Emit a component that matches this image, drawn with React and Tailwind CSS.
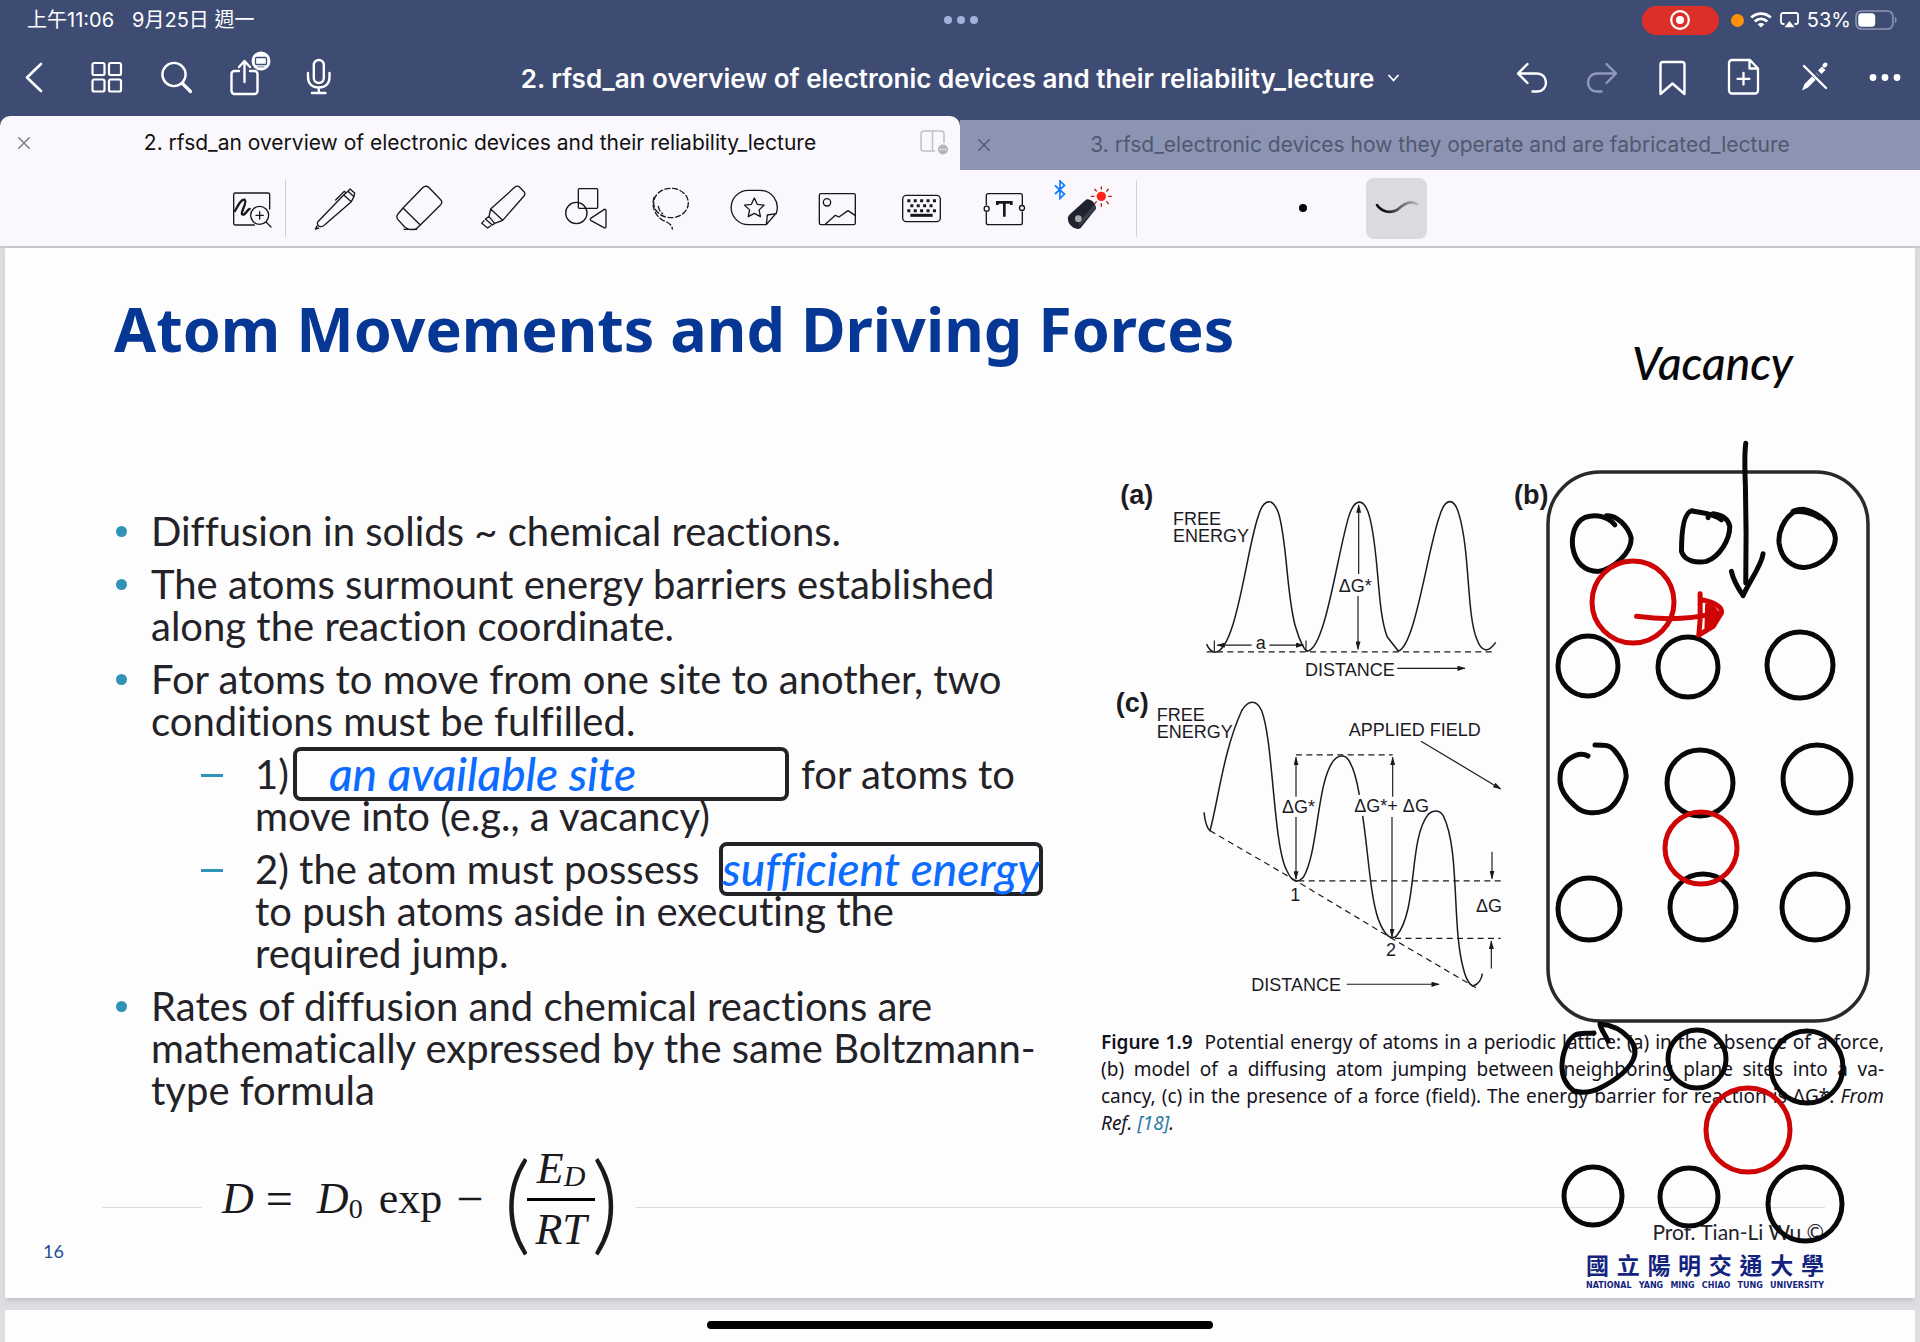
import React from "react";

const ui = "font-['Inter','Noto_Sans_CJK_TC',sans-serif]";

function Icon({ box = "0 0 44 44", size = 44, width = 2, children }) {
  return (
    <svg width={size} height={size} viewBox={box} fill="none" stroke="currentColor" strokeWidth={width} strokeLinecap="round" strokeLinejoin="round" aria-hidden="true" className="shrink-0 overflow-visible">
      {children}
    </svg>
  );
}

function NavButton({ label, dim, children }) {
  return (
    <button type="button" aria-label={label} className={"flex h-16 w-[71px] items-center justify-center " + (dim ? "text-[#8e99bd]" : "text-white")}>
      {children}
    </button>
  );
}

function StatusBar() {
  return (
    <div className="relative flex h-10 items-center justify-between pl-[27px] pr-[22px] text-xl text-white">
      <div className="flex gap-[18px]">
        <span>上午11:06</span>
        <span>9月25日 週一</span>
      </div>
      <div className="absolute left-1/2 top-4 -ml-4 flex gap-[5px]">
        <span className="size-2 rounded-full bg-[#a3b0db]" />
        <span className="size-2 rounded-full bg-[#a3b0db]" />
        <span className="size-2 rounded-full bg-[#a3b0db]" />
      </div>
      <div className="flex items-center">
        <span className="flex h-[29px] w-[77px] items-center justify-center rounded-full bg-[#dd2f29]">
          <svg width="22" height="22" viewBox="0 0 22 22" fill="none"><circle cx="11" cy="11" r="8.8" stroke="white" strokeWidth="2.2" /><circle cx="11" cy="11" r="4" fill="white" /></svg>
        </span>
        <span className="ml-3 size-[13px] rounded-full bg-[#ff9008]" />
        <svg className="ml-[6px]" width="22" height="16" viewBox="0 0 22 16" fill="none" stroke="white" strokeWidth="2.8">
          <path d="M1.2 5.6C6.8 0.2 15.2 0.2 20.8 5.6" /><path d="M4.8 9.4C8.4 6 13.6 6 17.2 9.4" /><path d="M11 15.6L7.6 12.2C9.5 10.5 12.5 10.5 14.4 12.2Z" fill="white" stroke="none" />
        </svg>
        <svg className="ml-2" width="19" height="16" viewBox="0 0 19 16" fill="none" stroke="white" strokeWidth="1.8">
          <path d="M4.5 12H3A2 2 0 0 1 1 10V3A2 2 0 0 1 3 1H16A2 2 0 0 1 18 3V10A2 2 0 0 1 16 12H14.5" /><path d="M9.5 9L14.5 15.2H4.5Z" fill="white" stroke="none" />
        </svg>
        <span className="ml-2">53%</span>
        <svg className="ml-1" width="43" height="20" viewBox="0 0 43 20" fill="none">
          <rect x="1" y="1" width="37" height="18" rx="5.5" stroke="#8e97b5" strokeWidth="1.6" /><rect x="3.2" y="3.2" width="17" height="13.6" rx="3.5" fill="white" /><path d="M40 7C42.2 8 42.2 12 40 13Z" fill="#8e97b5" />
        </svg>
      </div>
    </div>
  );
}

function NavBar() {
  return (
    <nav className="grid h-[76px] grid-cols-[1fr_auto_1fr] items-center">
      <div className="flex">
        <NavButton label="Back"><Icon width={2.6}><path d="M27 8L13 21.5L27 35" /></Icon></NavButton>
        <NavButton label="Thumbnails">
          <Icon width={2.2}><rect x="7.500" y="7" width="12" height="12" rx="1.8" /><rect x="24" y="7" width="12" height="12" rx="1.8" /><rect x="7.500" y="23.5" width="12" height="12" rx="1.8" /><rect x="24" y="23.5" width="12" height="12" rx="1.8" /></Icon>
        </NavButton>
        <NavButton label="Search"><Icon width={2.4}><circle cx="18" cy="18.5" r="11.6" /><path d="M26.5 27.5L34.5 35.5" strokeWidth="3.2" /></Icon></NavButton>
        <NavButton label="Share">
          <Icon width={2.4}>
            <path d="M12 15H7.5A3 3 0 0 0 4.500 18V35A3 3 0 0 0 7.500 38H27.500A3 3 0 0 0 30.500 35V18A3 3 0 0 0 27.500 15H23" /><path d="M17.500 26V5.500M12 11L17.500 5L23 11" />
            <circle cx="34" cy="5" r="9.500" fill="white" stroke="none" /><rect x="28.500" y="1.500" width="11" height="7" rx="1" stroke="#3e4c74" strokeWidth="1.300" /><path d="M31 10.800H37" stroke="#8e97b5" strokeWidth="1.200" />
          </Icon>
        </NavButton>
        <NavButton label="Record audio">
          <Icon width={2.4}><rect x="15.800" y="4" width="10" height="23" rx="5" /><path d="M10 17V21C10 28 14.500 31.500 20.800 31.500S31.500 28 31.500 21V17M20.800 31.500V36.500M14 37H27.500" /></Icon>
        </NavButton>
      </div>
      <button type="button" className="flex items-center gap-[14px] text-[26px] font-semibold text-white">
        <span className="whitespace-nowrap">2. rfsd_an overview of electronic devices and their reliability_lecture</span>
        <svg width="11" height="8" viewBox="0 0 11 8" fill="none" stroke="white" strokeWidth="1.800" strokeLinecap="round"><path d="M1 1.500L5.500 6.500L10 1.500" /></svg>
      </button>
      <div className="flex justify-end">
        <NavButton label="Undo"><Icon width={2.4}><path d="M19.500 8L10 17.500L19.500 27M10 17.500H28.500C34.500 17.500 38 21.500 38 26.500S34.500 35.500 29.500 35.500H24.500" /></Icon></NavButton>
        <NavButton label="Redo" dim><Icon width={2.4}><path d="M27.500 8L37 17.500L27.500 27M37 17.500H18.500C12.500 17.500 9 21.500 9 26.500S12.500 35.500 17.500 35.500H22.500" /></Icon></NavButton>
        <NavButton label="Bookmark"><Icon width={2.4}><path d="M10.500 38V8.500A2.500 2.500 0 0 1 13 6H32A2.500 2.500 0 0 1 34.500 8.500V38L22.500 27.500Z" /></Icon></NavButton>
        <NavButton label="Add page"><Icon width={2.3}><path d="M29 4H11A3 3 0 0 0 8 7V34.500A3 3 0 0 0 11 37.500H34A3 3 0 0 0 37 34.500V12.500ZM28.500 4V12.500H37M22.500 17V28.500M16.500 22.800H28.500" /></Icon></NavButton>
        <NavButton label="Stop editing">
          <Icon width={2.4}><path d="M10 34.500L12.500 28L24 16.500L27.500 20L16 31.500Z" fill="white" stroke="none" /><path d="M26 14.500L30 10.500L33.500 14L29.500 18Z" fill="white" stroke="none" /><path d="M32.500 9.500L33.500 8.500" strokeWidth="4" /><path d="M13 9L35 32" stroke="#3e4c74" strokeWidth="5" /><path d="M12 10L34 32" /></Icon>
        </NavButton>
        <NavButton label="More"><Icon><g fill="white" stroke="none"><circle cx="10" cy="21.500" r="3.400" /><circle cx="22" cy="21.500" r="3.400" /><circle cx="34" cy="21.500" r="3.400" /></g></Icon></NavButton>
      </div>
    </nav>
  );
}

function CloseMark() {
  return <svg width="12" height="12" viewBox="0 0 12 12" fill="none" stroke="currentColor" strokeWidth="1.400" strokeLinecap="round"><path d="M0.800 0.800L11.200 11.200M11.200 0.800L0.800 11.200" /></svg>;
}

function Tabs() {
  return (
    <div className="grid h-[54px] grid-cols-2 items-end text-[21px]">
      <div className="relative flex h-[54px] items-center justify-center rounded-t-[10px] bg-[#faf8fc] px-12 text-[#111]">
        <button type="button" aria-label="Close tab" className="absolute left-[18px] text-[#777]"><CloseMark /></button>
        <button type="button" className="whitespace-nowrap">2. rfsd_an overview of electronic devices and their reliability_lecture</button>
        <button type="button" aria-label="Split view" className="absolute right-3 text-[#c2c0c5]">
          <svg width="28" height="26" viewBox="0 0 28 26" fill="none" stroke="currentColor" strokeWidth="1.500"><path d="M15 21H4A3 3 0 0 1 1 18V4A3 3 0 0 1 4 1H21A3 3 0 0 1 24 4V13M12.500 1V21" /><circle cx="23" cy="19.500" r="5" fill="#b5b3b8" stroke="none" /><path d="M20 19.500H26" stroke="white" strokeDasharray="1.200 1.200" /></svg>
        </button>
      </div>
      <div className="relative flex h-[50px] items-center justify-center bg-[#8b94b3] px-12 text-[#50586f]">
        <button type="button" aria-label="Close tab" className="absolute left-[18px]"><CloseMark /></button>
        <button type="button" className="whitespace-nowrap">3. rfsd_electronic devices how they operate and are fabricated_lecture</button>
      </div>
    </div>
  );
}

function star(cx, cy, outer, inner) {
  const pts = [];
  for (let i = 0; i < 10; i += 1) {
    const r = i % 2 ? inner : outer;
    const a = (Math.PI / 5) * i - Math.PI / 2;
    pts.push((cx + r * Math.cos(a)).toFixed(1) + "," + (cy + r * Math.sin(a)).toFixed(1));
  }
  return pts.join(" ");
}

const tools = [
  ["Pen", "276 51 132 132", <path key="p" d="M293 159L371 78L394 98L316 166C306 178 288 172 293 159ZM371 78L384 67L402 83L394 98M390 60L404 72M384 67L390 60M404 72L402 83M347 93L373 67L378 72M291 171L286 180L296 177" />],
  ["Eraser", "528 51 132 132", <path key="p" d="M549 117L608 56Q617 48 626 55L662 92Q669 99 662 107L601 168ZM549 117L534 135Q527 144 534 152L554 174Q570 186 588 180L601 168M552 181H590" />],
  ["Highlighter", "780 51 132 132", <path key="p" d="M812 120L884 55Q892 48 899 55L912 68Q917 74 912 81L848 154ZM812 120L807 143L824 163L848 154M807 143L796 150L817 168L824 163M792 155L785 163L803 177L812 170" />],
  ["Shapes", "1032 51 132 132", <g key="g"><rect x="1075" y="59" width="58" height="59" rx="3" /><circle cx="1069" cy="132" r="32" /><path d="M1112 148L1153 121Q1158 120 1158 126V173Q1158 178 1152 176L1112 154Q1109 151 1112 148Z" /></g>],
  ["Lasso", "1284 51 132 132", <g key="g" strokeDasharray="15 8"><ellipse cx="1353" cy="102" rx="52" ry="44" /><path d="M1302 85C1294 112 1304 140 1330 155C1346 160 1356 168 1357 180M1315 112C1317 122 1320 128 1328 134" /></g>],
  ["Stickers", "94 231 132 132", <g key="g"><path d="M197 347H143A51.500 51.500 0 0 1 143 244H178A51.500 51.500 0 0 1 227 312L197 347ZM197 347L200 318L227 314" /><polygon points={star(161, 298, 31, 15)} /></g>],
  ["Image", "348 231 132 132", <g key="g"><rect x="358" y="254" width="108" height="93" rx="5" /><circle cx="381" cy="280" r="11" /><path d="M376 346L406 319L417 324L444 305L465 319" /></g>],
  ["Keyboard", "600 231 132 132", <g key="g"><rect x="608" y="259" width="113" height="79" rx="11" /><path d="M622 275H708M622 305H708" strokeWidth="9" strokeDasharray="9 10.200" strokeLinecap="butt" /><path d="M631 290H700" strokeWidth="9" strokeDasharray="9 10.200" strokeLinecap="butt" /><path d="M631 319H698" strokeWidth="9" strokeLinecap="butt" /></g>],
  ["Text", "852 231 132 132", <g key="g"><path d="M859 287V260Q859 254 865 254H961Q967 254 967 260V287M967 309V341Q967 347 961 347H865Q859 347 859 341V309" /><circle cx="860" cy="299" r="7.500" /><circle cx="966" cy="297" r="7.500" /><path d="M892 288V280H934V288M913 280V323" strokeWidth="8" strokeLinecap="butt" strokeLinejoin="miter" /></g>],
  ["Laser pointer", "1095 219 150 150", <g key="g"><path d="M1108 314L1158 269C1168 264 1187 276 1188 296L1142 354C1128 364 1100 345 1104 322Z" fill="#20222f" stroke="none" /><path d="M1138 350L1188 296L1184 281L1136 338Z" fill="#3a3c4b" stroke="none" /><circle cx="1135" cy="326" r="10" fill="#aaa" stroke="none" /><circle cx="1204" cy="259" r="14" fill="#ff2316" stroke="none" /><g stroke="#b3201c"><path d="M1204 237V231M1204 281V289M1182 259H1174M1226 259H1234M1189 243L1184 238M1220 243L1225 238M1189 275L1184 281M1220 275L1225 281" /></g></g>],
];

function Toolbar() {
  return (
    <div className="flex h-[78px] items-center border-b-2 border-[#c9c7cc] bg-[#faf8fc] pl-[219px] text-[#17171c]">
      <button type="button" aria-label="Zoom window" className="flex h-16 w-[66px] items-center justify-center">
        <Icon box="30 49 132 132" width={4}>
          <path d="M149 118V75Q149 70 144 70H46Q41 70 41 75V161Q41 166 46 166H103" />
          <path d="M45 124C55 105 64 87 74 90C84 96 58 132 68 135C78 136 82 118 89 118" strokeWidth="7" />
          <circle cx="119" cy="137" r="27" /><path d="M119 126V148M108 137H130M138 157L153 172" />
        </Icon>
      </button>
      <span className="h-[57px] w-px bg-[#cfcdd2]" />
      <div className="ml-[6px] flex">
        {tools.map(([name, box, art]) => (
          <button key={name} type="button" aria-label={name} className="relative flex h-16 w-[84px] items-center justify-center">
            {name === "Laser pointer" ? (
              <>
                <svg className="absolute left-[6px] top-1" width="12" height="20" viewBox="0 0 12 20" fill="none" stroke="#127bff" strokeWidth="1.700"><path d="M1 5.500L10.500 14L6 18.500V1L10.500 5.500L1 14" /></svg>
                <Icon box={box} size={50} width={4}>{art}</Icon>
              </>
            ) : (
              <Icon box={box} width={4}>{art}</Icon>
            )}
          </button>
        ))}
      </div>
      <span className="ml-1 h-[57px] w-px bg-[#d6d4d9]" />
      <button type="button" aria-label="Stroke size" className="ml-[136px] flex size-[60px] items-center justify-center"><span className="size-2 rounded-full bg-black" /></button>
      <button type="button" aria-label="Stroke style" className="ml-[33px] flex h-[61px] w-[61px] items-center justify-center rounded-lg bg-[#dcdade]">
        <svg width="44" height="18" viewBox="0 0 44 18" fill="none" strokeLinecap="round" strokeWidth="2.600">
          <defs><linearGradient id="fade"><stop offset="0.200" stopColor="#111" /><stop offset="1" stopColor="#bbb" /></linearGradient></defs>
          <path d="M2 6C6 12 14 15 22 11C29 5 35 1 42 5" stroke="url(#fade)" />
        </svg>
      </button>
    </div>
  );
}

function Bullet({ children }) {
  return (
    <li className="flex">
      <span className="mt-4 mr-6 size-[11px] shrink-0 rounded-full bg-[#2f93b8]" />
      <div className="whitespace-nowrap">{children}</div>
    </li>
  );
}

function SubItem({ children }) {
  return (
    <li className="flex whitespace-nowrap">
      <span className="mt-[21px] mr-8 h-[3px] w-[22px] shrink-0 bg-[#2f93b8]" />
      <div>{children}</div>
    </li>
  );
}

function Blank({ className, children }) {
  return (
    <span className={"-my-[6px] flex h-[54px] items-center rounded-lg border-4 border-[#232227] text-[46px] font-medium italic text-[#0c6cff] " + className}>
      {children}
    </span>
  );
}

function PointList() {
  return (
    <ul className="flex flex-col gap-[11px] pt-10 text-[40px]/[42px] text-[#232227] [font-variant-ligatures:none]">
      <Bullet>Diffusion in solids ~ chemical reactions.</Bullet>
      <Bullet>The atoms surmount energy barriers established<br />along the reaction coordinate.</Bullet>
      <Bullet>For atoms to move from one site to another, two<br />conditions must be fulfilled.</Bullet>
      <li>
        <ul className="flex flex-col gap-[11px] pl-[85px]">
          <SubItem>
            <div className="flex items-center">
              <span className="w-[38px]">1)</span>
              <Blank className="w-[496px] pl-8">an available site</Blank>
              <span className="ml-3">for atoms to</span>
            </div>
            move into (e.g., a vacancy)
          </SubItem>
          <SubItem>
            <div className="flex items-center">
              <span className="w-[464px]">2) the atom must possess</span>
              <Blank className="w-[324px] justify-center">sufficient energy</Blank>
            </div>
            to push atoms aside in executing the<br />required jump.
          </SubItem>
        </ul>
      </li>
      <Bullet>Rates of diffusion and chemical reactions are<br />mathematically expressed by the same Boltzmann-<br />type formula</Bullet>
    </ul>
  );
}

function Figure() {
  return (
    <svg className="block overflow-visible" width="460" height="546" viewBox="0 30 1380 1638" fill="none" stroke="#1b1b1f" strokeWidth="4.500" fontFamily="'Liberation Sans', Arial, sans-serif" role="img" aria-label="Potential energy curves">
      <defs>
        <marker id="tip" viewBox="0 0 10 6" refX="9" refY="3" markerWidth="26" markerHeight="15" markerUnits="userSpaceOnUse" orient="auto-start-reverse"><path d="M0 0L10 3L0 6Z" fill="#1b1b1f" stroke="none" /></marker>
      </defs>
      <g transform="scale(1 1.052)">
        <path d="M350 525C358 543 365 548 375 548C440 545 470 250 505 160C520 110 547 105 565 150C592 230 590 400 618 480C630 520 645 545 652 545C705 540 740 280 775 165C793 107 822 105 838 160C868 260 860 430 892 505L925 545C975 530 1010 270 1047 165C1065 105 1092 105 1107 155C1140 260 1130 440 1160 510C1175 550 1195 550 1217 520" />
        <path d="M342 1005C345 1030 350 1050 360 1057C385 970 400 830 455 715C475 683 500 683 515 715C550 800 550 1100 590 1170C605 1202 620 1210 640 1190C685 1120 680 920 730 858C745 840 765 840 775 855C790 875 800 910 808 955M818 1015C835 1120 840 1240 865 1310C885 1360 905 1370 920 1357C985 1280 955 1080 1015 1010C1030 997 1050 997 1060 1015C1110 1110 1085 1330 1120 1450C1130 1490 1145 1500 1150 1500C1165 1495 1175 1480 1177 1465" />
        <g strokeWidth="3.500" strokeDasharray="18 13">
          <path d="M350 547H1215M618 841H908M625 1200H1232M915 1364H1232M360 1057L618 1200L905 1364L1158 1505" />
        </g>
        <g strokeWidth="3.500">
          <path d="M373 515V547M648 515V547" />
          <path d="M485 528H382" markerEnd="url(#tip)" /><path d="M538 528H640" markerEnd="url(#tip)" />
          <path d="M806 325V128" markerEnd="url(#tip)" /><path d="M804 388V540" markerEnd="url(#tip)" />
          <path d="M922 594H1125" markerEnd="url(#tip)" /><path d="M770 1495H1047" markerEnd="url(#tip)" />
          <path d="M618 960V848" markerEnd="url(#tip)" /><path d="M618 1018V1195" markerEnd="url(#tip)" />
          <path d="M908 960V848" markerEnd="url(#tip)" /><path d="M906 1018V1360" markerEnd="url(#tip)" />
          <path d="M993 802L1232 938" markerEnd="url(#tip)" />
          <path d="M1206 1117V1194" markerEnd="url(#tip)" /><path d="M1204 1450V1372" markerEnd="url(#tip)" />
        </g>
      </g>
      <g fill="#1b1b1f" stroke="none" fontSize="54">
        <text x="249" y="194">FREE</text><text x="249" y="245">ENERGY</text>
        <text x="200" y="783">FREE</text><text x="200" y="834">ENERGY</text>
        <text x="645" y="648">DISTANCE</text><text x="484" y="1593">DISTANCE</text>
        <text x="776" y="829">APPLIED FIELD</text>
        <text x="497" y="568">a</text><text x="746" y="397">ΔG*</text>
        <text x="576" y="1059">ΔG*</text><text x="793" y="1057">ΔG*+ ΔG</text>
        <text x="1158" y="1356">ΔG</text><text x="601" y="1323">1</text><text x="888" y="1489">2</text>
      </g>
      <g fill="#1b1b1f" stroke="none" fontSize="81" fontWeight="700">
        <text x="91" y="131">(a)</text><text x="77" y="755">(c)</text><text x="1272" y="131">(b)</text>
      </g>
    </svg>
  );
}

function Caption() {
  return (
    <p className="mt-[13px] ml-[11px] w-[783px] font-['Noto_Sans',sans-serif] text-[19px]/[27px] text-[#15131c]">
      <span className="block whitespace-nowrap [text-align-last:justify]"><strong className="font-semibold">Figure 1.9</strong> &nbsp;Potential energy of atoms in a periodic lattice: (a) in the absence of a force,</span>
      <span className="block whitespace-nowrap [text-align-last:justify]">(b) model of a diffusing atom jumping between neighboring plane sites into a va-</span>
      <span className="block whitespace-nowrap [text-align-last:justify]">cancy, (c) in the presence of a force (field). The energy barrier for reaction is ΔG*. <em>From</em></span>
      <em className="block">Ref. <a href="#ref18" className="text-[#2a7ba6]">[18]</a>.</em>
    </p>
  );
}

const atoms = [
  [1588, 666, 30], [1688, 667, 30], [1800, 665, 33],
  [1700, 783, 33], [1817, 779, 34],
  [1589, 909, 31], [1703, 907, 33], [1815, 907, 33],
  [1697, 1059, 29], [1807, 1067, 36],
  [1593, 1196, 29], [1689, 1197, 29], [1805, 1204, 37],
];
const movingAtoms = [[1633, 602, 41], [1701, 848, 36], [1748, 1130, 42]];

function Ink() {
  return (
    <svg className="pointer-events-none absolute right-0 top-0" width="420" height="1050" viewBox="1495 248 420 1050" fill="none" stroke="#08080a" strokeWidth="5" strokeLinecap="round" strokeLinejoin="round" role="img" aria-label="Pen annotations">
      <rect x="1548" y="472" width="320" height="549" rx="52" stroke="#2a292d" strokeWidth="3.500" />
      {atoms.map(([x, y, r]) => <circle key={x + "-" + y} cx={x} cy={y} r={r} />)}
      <path d="M1595 745C1605 745 1610 745 1614 750C1621 758 1627 768 1626 778C1623 792 1615 808 1604 811C1595 814 1583 814 1575 806C1567 799 1560 790 1560 780C1560 770 1562 764 1569 759C1576 754 1583 753 1588 756" />
      <path d="M1608 1041C1605 1034 1601 1030 1600 1024C1612 1025 1622 1030 1629 1038C1635 1045 1637 1052 1633 1060C1627 1072 1612 1082 1600 1088C1592 1092 1582 1093 1574 1091C1566 1085 1562 1077 1562 1067C1562 1054 1567 1040 1575 1035C1582 1032 1588 1034 1594 1033" />
      <g transform="translate(1500 300) scale(0.333)" strokeWidth="15">
        <path d="M345 675C325 652 290 640 255 653C222 668 215 710 218 740C225 790 255 815 295 815C340 808 395 760 394 715C385 680 350 645 320 648" />
        <path d="M625 652V654M665 660C640 640 605 640 575 633C550 640 545 700 545 755C555 785 590 790 620 785C660 770 690 720 690 680C685 655 665 645 640 642" />
        <path d="M890 632C850 655 835 700 838 730C845 780 880 805 915 803C960 800 1008 760 1007 715C1005 675 950 635 910 628C885 628 875 638 880 637C905 632 940 640 960 655" />
        <path d="M738 430C733 470 735 500 737 560L739 700L738 850M695 815C700 840 715 865 730 888C745 850 785 800 790 762" />
      </g>
      <g stroke="#cf0404">
        {movingAtoms.map(([x, y, r]) => <circle key={x + "-" + y} cx={x} cy={y} r={r} />)}
        <g transform="translate(1500 300) scale(0.333)" strokeWidth="15">
          <path d="M410 950C470 958 560 962 640 942M601 882V960L597 1006L640 980L665 940C668 920 645 908 605 900" />
          <path d="M620 915L618 985L640 978L660 945L640 920Z" fill="#cf0404" strokeWidth="8" />
        </g>
      </g>
      <text x="1632" y="380" fill="#08080a" stroke="none" fontSize="46" fontStyle="italic" fontWeight="500" fontFamily="Lato, sans-serif">Vacancy</text>
    </svg>
  );
}

function Formula() {
  return (
    <div className="flex h-[120px] items-center">
      <span className="h-px w-[100px] bg-[#dcdce0]" />
      <div className="mb-4 flex h-[120px] w-[434px] items-center pl-5 font-['Liberation_Serif',serif] text-[44px]/[50px] text-[#1a1a1e]">
        <i>D</i>
        <span className="ml-3 text-5xl/[50px]">=</span>
        <i className="ml-6">D</i><sub className="bottom-0 mt-5 text-[28px]">0</sub>
        <span className="ml-4">exp</span>
        <span className="ml-[14px] text-5xl/[50px]">−</span>
        <span className="ml-5 font-['Lato',sans-serif] text-[108px]/[110px] font-light">(</span>
        <span className="-mx-1 flex w-[68px] shrink-0 flex-col items-center">
          <span className="flex items-end pb-1 italic">E<span className="text-[30px]/[36px]">D</span></span>
          <span className="h-[3px] w-full bg-black" />
          <i className="pt-1">RT</i>
        </span>
        <span className="font-['Lato',sans-serif] text-[108px]/[110px] font-light">)</span>
      </div>
      <span className="mr-[90px] h-px flex-1 bg-[#dcdce0]" />
    </div>
  );
}

function SlideFooter() {
  return (
    <div className="-mt-12 flex items-start justify-between pl-[38px] pr-[91px]">
      <span className="pt-[18px] text-lg text-[#1f4f93]">16</span>
      <div className="flex w-[238px] flex-col">
        <span className="text-right text-[21px]/[26px] text-[#232227]">Prof. Tian-Li Wu ©</span>
        <span className="mt-1 flex justify-between font-['Noto_Sans_CJK_TC',sans-serif] text-[23px]/[30px] font-bold text-[#14247e]">
          {"國立陽明交通大學".split("").map((c) => <span key={c}>{c}</span>)}
        </span>
        <span className="block whitespace-nowrap font-['DejaVu_Sans',sans-serif] text-[8px]/[14px] font-bold text-[#14247e] [text-align-last:justify]">NATIONAL YANG MING CHIAO TUNG UNIVERSITY</span>
      </div>
    </div>
  );
}

export default function App() {
  return (
    <div className={"flex min-h-screen flex-col bg-[#dedde1] " + ui}>
      <header className="bg-[#3e4c74]">
        <StatusBar />
        <NavBar />
        <Tabs />
      </header>
      <Toolbar />
      <main className="flex flex-1 flex-col gap-3 px-[5px]">
        <section className="relative bg-[#fdfdfe] pb-[5px] font-['Lato',sans-serif] shadow-md">
          <h1 className="pl-[109px] pt-10 font-['Noto_Sans',sans-serif] text-[61px]/[82px] font-bold text-[#063795]">Atom Movements and Driving Forces</h1>
          <div className="mt-[100px] flex justify-between pl-[111px]">
            <PointList />
            <div className="w-[825px] shrink-0">
              <Figure />
              <Caption />
            </div>
          </div>
          <div className="mt-[10px] pl-[97px]"><Formula /></div>
          <SlideFooter />
          <Ink />
        </section>
        <div className="flex flex-1 justify-center bg-[#fdfdfe] pt-[11px]">
          <span className="h-2 w-[506px] rounded-full bg-black" />
        </div>
      </main>
    </div>
  );
}
